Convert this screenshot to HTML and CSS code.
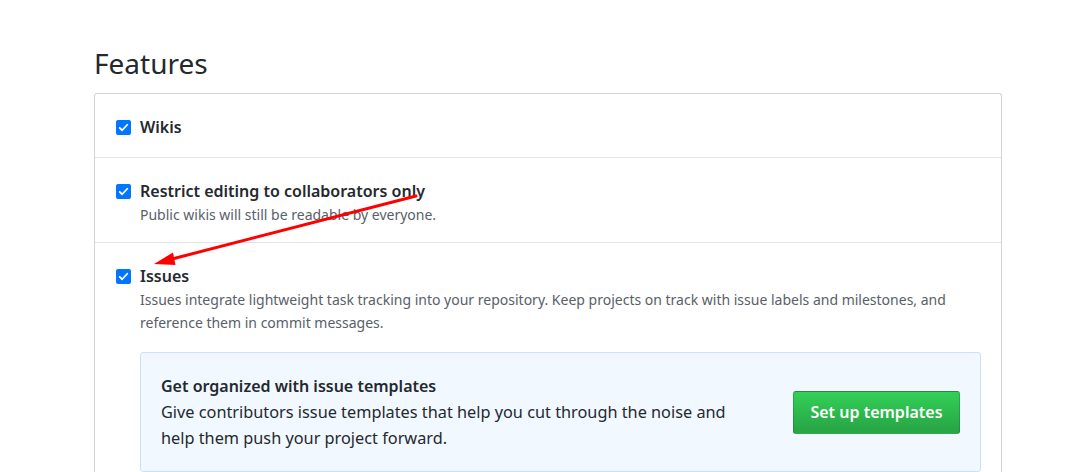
FILE: index.html
```html
<!DOCTYPE html>
<html lang="en">
<head>
<meta charset="utf-8">
<title>Features</title>
<link rel="stylesheet" href="styles.css">
</head>
<body>
<div class="page">
  <h2 class="subhead">Features</h2>
  <div class="box">
    <div class="row row-first">
      <label class="check-line">
        <span class="check"><svg viewBox="0 0 16 16" width="11" height="11"><path d="M2.5 8.5l3.5 3.5 7.5-8" fill="none" stroke="#fff" stroke-width="2.6" stroke-linecap="round" stroke-linejoin="round"/></svg></span>
        <span class="title">Wikis</span>
      </label>
    </div>
    <div class="row">
      <label class="check-line">
        <span class="check"><svg viewBox="0 0 16 16" width="11" height="11"><path d="M2.5 8.5l3.5 3.5 7.5-8" fill="none" stroke="#fff" stroke-width="2.6" stroke-linecap="round" stroke-linejoin="round"/></svg></span>
        <span class="title">Restrict editing to collaborators only</span>
      </label>
      <p class="note">Public wikis will still be readable by everyone.</p>
    </div>
    <div class="row">
      <label class="check-line">
        <span class="check"><svg viewBox="0 0 16 16" width="11" height="11"><path d="M2.5 8.5l3.5 3.5 7.5-8" fill="none" stroke="#fff" stroke-width="2.6" stroke-linecap="round" stroke-linejoin="round"/></svg></span>
        <span class="title">Issues</span>
      </label>
      <p class="note">Issues integrate lightweight task tracking into your repository. Keep projects on track with issue labels and milestones, and<br>reference them in commit messages.</p>
      <div class="flash">
        <div class="flash-text">
          <h4 class="flash-title">Get organized with issue templates</h4>
          <p class="flash-body">Give contributors issue templates that help you cut through the noise and<br>help them push your project forward.</p>
        </div>
        <button class="btn-primary">Set up templates</button>
      </div>
    </div>
  </div>
</div>
<svg class="arrow" width="1084" height="472" viewBox="0 0 1084 472">
  <line x1="416" y1="196" x2="170" y2="259.5" stroke="#f00" stroke-width="3" stroke-linecap="round"/>
  <polygon points="154,264 173,252.5 175.5,265" fill="#f00"/>
</svg>
</body>
</html>
```

FILE: styles.css
```css
* { box-sizing: border-box; }
html, body { margin: 0; padding: 0; background: #fff; }
body {
  font-family: "Noto Sans", "Liberation Sans", sans-serif;
  color: #24292e;
  position: relative;
}
.page {
  padding: 43px 0 0 94px;
  width: 1002px;
}
.subhead {
  margin: 0 0 10px;
  font-size: 28px;
  font-weight: 400;
  line-height: 40px;
  color: #24292e;
}
.box {
  border: 1px solid #d1d5da;
  border-radius: 3px;
  border-bottom: none;
}
.row {
  padding: 21px 20px 16px 21px;
  border-top: 1px solid #e1e4e8;
}
.row:first-child { border-top: none; }
.row-first { padding-bottom: 18px; }
.check-line {
  display: flex;
  align-items: center;
  gap: 9px;
  height: 24px;
}
.check {
  width: 15px;
  height: 15px;
  border-radius: 2px;
  background: #0075ff;
  display: flex;
  align-items: center;
  justify-content: center;
  flex: none;
}
.title {
  font-size: 16px;
  font-weight: 600;
  line-height: 24px;
}
.note {
  margin: 0 0 0 24px;
  font-size: 14px;
  line-height: 23px;
  color: #586069;
}
.flash {
  margin: 18px 0 0 24px;
  background: #f1f8ff;
  border: 1px solid #c8e1ff;
  border-radius: 3px;
  padding: 20px 20px 20px 20px;
  display: flex;
  align-items: center;
  justify-content: space-between;
}
.flash-title {
  margin: 0;
  font-size: 16px;
  font-weight: 600;
  line-height: 26px;
}
.flash-body {
  margin: 0;
  font-size: 16.3px;
  line-height: 26px;
}
.btn-primary {
  font-family: inherit;
  width: 167px;
  height: 43px;
  font-size: 16px;
  font-weight: 600;
  color: #fff;
  background: linear-gradient(#34d058, #28a745 90%);
  border: 1px solid rgba(27,31,35,.2);
  border-radius: 3px;
  padding: 0;
  flex: none;
}
.arrow {
  position: absolute;
  left: 0;
  top: 0;
  pointer-events: none;
}
```
